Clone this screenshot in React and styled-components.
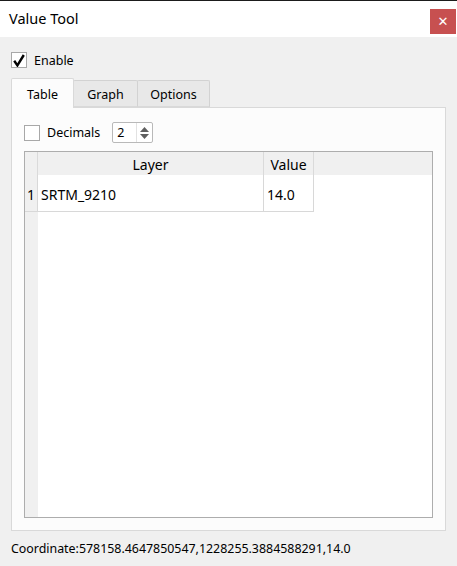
import React from "react";
import styled, { createGlobalStyle } from "styled-components";

const Global = createGlobalStyle`
  html, body { margin: 0; padding: 0; }
  body {
    background: #f0f0f0;
    font-family: "Noto Sans", "Open Sans", sans-serif;
    color: #000;
    overflow: hidden;
  }
`;

const Window = styled.div`
  width: 457px;
  height: 566px;
  display: flex;
  flex-direction: column;
  background: #f0f0f0;
  border-top: 1px solid #1b1b1b;
  box-sizing: border-box;
`;

const TitleBar = styled.div`
  height: 36px;
  flex: none;
  background: #fff;
  display: flex;
  align-items: flex-start;
  justify-content: space-between;
`;

const Title = styled.div`
  font-size: 14.5px;
  line-height: 20px;
  margin: 7px 0 0 9px;
`;

const CloseButton = styled.div`
  width: 26px;
  height: 25px;
  margin: 8px 1px 0 0;
  background: #c75050;
  color: #fff;
  display: flex;
  align-items: center;
  justify-content: center;
  font-family: "DejaVu Sans", sans-serif;
  font-size: 13px;
  font-weight: bold;
`;

const Body = styled.div`
  flex: 1;
  display: flex;
  flex-direction: column;
  padding: 15px 11px 0 11px;
`;

const CheckRow = styled.label`
  display: flex;
  align-items: center;
  height: 16px;
  gap: ${(p) => p.$gap || 7}px;
  font-size: 12.5px;
`;

const Box = styled.span`
  width: 16px;
  height: 16px;
  box-sizing: border-box;
  border: 1px solid #a8a8a8;
  background: #fff;
  display: flex;
  align-items: center;
  justify-content: center;
  flex: none;
`;

const TabBar = styled.div`
  display: flex;
  align-items: flex-end;
  height: 29px;
  margin-top: 10px;
  position: relative;
  z-index: 1;
`;

const Tab = styled.div`
  box-sizing: border-box;
  height: ${(p) => (p.$active ? 30 : 27)}px;
  margin-bottom: ${(p) => (p.$active ? -1 : 0)}px;
  width: ${(p) => p.$w}px;
  margin-left: ${(p) => (p.$first ? 0 : -1)}px;
  border: 1px solid ${(p) => (p.$active ? "#d9d9d9" : "#d2d2d2")};
  border-bottom: ${(p) => (p.$active ? "none" : "1px solid #d9d9d9")};
  border-radius: 2px 2px 0 0;
  background: ${(p) => (p.$active ? "#fcfcfc" : "#e8e8e8")};
  font-size: 12.5px;
  display: flex;
  align-items: center;
  padding-top: ${(p) => (p.$active ? 1 : 2)}px;
  justify-content: center;
  position: relative;
  z-index: ${(p) => (p.$active ? 2 : 1)};
`;

const Pane = styled.div`
  box-sizing: border-box;
  height: 424px;
  border: 1px solid #d9d9d9;
  background: #fcfcfc;
  padding: 14px 12px 12px 12px;
  display: flex;
  flex-direction: column;
  gap: 8px;
`;

const DecRow = styled.div`
  display: flex;
  align-items: center;
  height: 21px;
`;

const Spin = styled.div`
  margin-left: 12px;
  width: 41px;
  height: 21px;
  box-sizing: border-box;
  border: 1px solid #b9b9b9;
  border-radius: 2px;
  background: #fff;
  display: flex;
  font-size: 12.5px;
`;

const SpinValue = styled.div`
  width: 24px;
  padding-left: 4px;
  box-sizing: border-box;
  display: flex;
  align-items: center;
  border-right: 1px solid #e2e2e2;
`;

const SpinArrows = styled.div`
  flex: 1;
  display: flex;
  flex-direction: column;
  align-items: center;
  justify-content: center;
  gap: 2px;
`;

const Table = styled.div`
  flex: 1;
  border: 1px solid #adadad;
  background: #fff;
  display: grid;
  grid-template-columns: 13px 226px 50px 1fr;
  grid-template-rows: 23px 37px 1fr;
  font-size: 14px;
`;

const HeadCell = styled.div`
  background: #f0f0f0;
  border-right: ${(p) => (p.$last ? "none" : "1px solid #dadada")};
  display: flex;
  align-items: center;
  justify-content: center;
  box-sizing: border-box;
  padding-top: 1px;
`;

const RowHead = styled.div`
  background: #f0f0f0;
  border-right: 1px solid #d8d8d8;
  border-bottom: 1px solid #d8d8d8;
  display: flex;
  align-items: center;
  justify-content: center;
  box-sizing: border-box;
  padding-top: 2px;
`;

const Cell = styled.div`
  border-right: 1px solid #d8d8d8;
  border-bottom: 1px solid #d8d8d8;
  display: flex;
  align-items: center;
  padding: 2px 0 0 3px;
  box-sizing: border-box;
`;

const Filler = styled.div`
  background: ${(p) => p.$bg || "#fff"};
`;

const Status = styled.div`
  font-size: 12.4px;
  margin-top: 9px;
  line-height: 18px;
`;

export default function App() {
  return (
    <>
      <Global />
      <Window>
        <TitleBar>
          <Title>Value Tool</Title>
          <CloseButton>✕</CloseButton>
        </TitleBar>
        <Body>
          <CheckRow $gap={7}>
            <Box>
              <svg width="12" height="13" viewBox="0 0 12 13">
                <path d="M1.2 6.8 L4.4 11.4 L10.8 1" fill="none" stroke="#000" strokeWidth="2.4" />
              </svg>
            </Box>
            Enable
          </CheckRow>
          <TabBar>
            <Tab $active $first $w={63}>Table</Tab>
            <Tab $w={65}>Graph</Tab>
            <Tab $w={73}>Options</Tab>
          </TabBar>
          <Pane>
            <DecRow>
              <CheckRow $gap={7}>
                <Box />
                Decimals
              </CheckRow>
              <Spin>
                <SpinValue>2</SpinValue>
                <SpinArrows>
                  <svg width="9" height="5" viewBox="0 0 9 5"><path d="M0 5 L4.5 0 L9 5Z" fill="#5f5f5f" /></svg>
                  <svg width="9" height="5" viewBox="0 0 9 5"><path d="M0 0 L4.5 5 L9 0Z" fill="#5f5f5f" /></svg>
                </SpinArrows>
              </Spin>
            </DecRow>
            <Table>
              <HeadCell />
              <HeadCell>Layer</HeadCell>
              <HeadCell>Value</HeadCell>
              <HeadCell $last />
              <RowHead>1</RowHead>
              <Cell>SRTM_9210</Cell>
              <Cell>14.0</Cell>
              <Filler />
              <Filler $bg="#f0f0f0" />
              <Filler />
              <Filler />
              <Filler />
            </Table>
          </Pane>
          <Status>Coordinate:578158.4647850547,1228255.3884588291,14.0</Status>
        </Body>
      </Window>
    </>
  );
}
